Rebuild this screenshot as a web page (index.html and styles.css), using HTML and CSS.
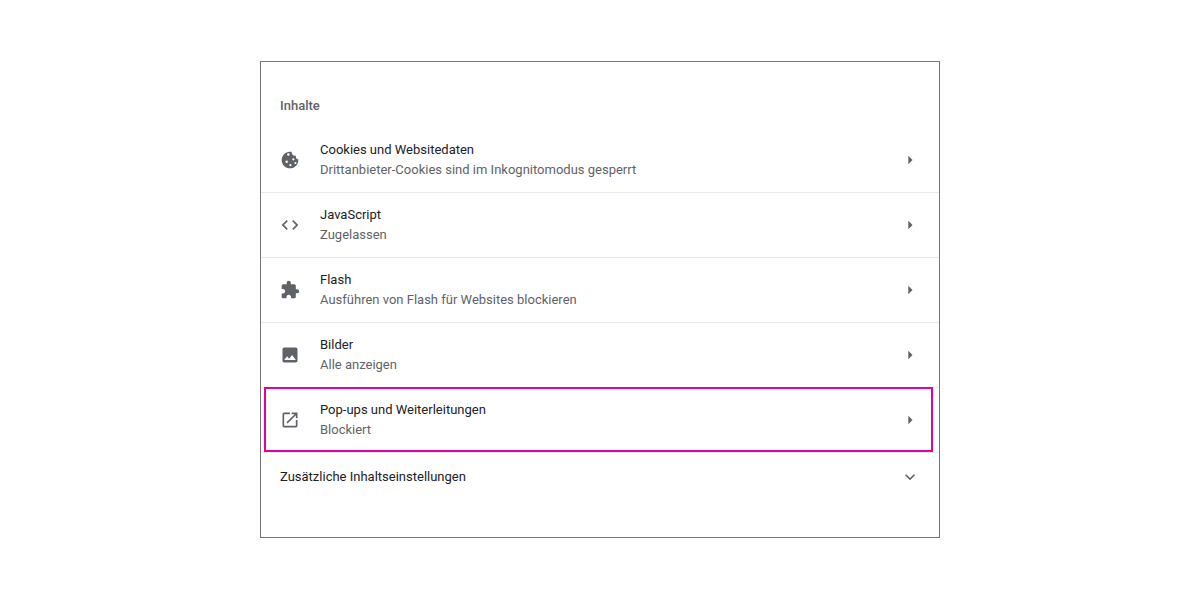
FILE: index.html
```html
<!DOCTYPE html>
<html>
<head>
<meta charset="UTF-8">
<title>Inhalte</title>
<link rel="stylesheet" href="styles.css">
</head>
<body>
<div class="frame">
  <h3 class="section-title">Inhalte</h3>

  <div class="row">
    <svg class="row-icon" viewBox="0 0 24 24"><path fill-rule="evenodd" d="M21.95 10.99c-1.79-.03-3.7-1.95-2.68-4.22-2.97 1-5.78-1.59-5.19-4.56C7.11.74 2 6.41 2 12c0 5.52 4.48 10 10 10 5.89 0 10.54-5.08 9.95-11.01zM10 7a1.5 1.5 0 1 1 0-3 1.5 1.5 0 0 1 0 3zm-2 8.5a1.5 1.5 0 1 1 0-3 1.5 1.5 0 0 1 0 3zm4.5 4a1.3 1.3 0 1 1 0-2.6 1.3 1.3 0 0 1 0 2.6zm3.5-7a1.3 1.3 0 1 1 0-2.6 1.3 1.3 0 0 1 0 2.6zm2.5 4.2a1.2 1.2 0 1 1 0-2.4 1.2 1.2 0 0 1 0 2.4z"/></svg>
    <div class="row-text">
      <div class="row-title">Cookies und Websitedaten</div>
      <div class="row-sub">Drittanbieter-Cookies sind im Inkognitomodus gesperrt</div>
    </div>
    <svg class="row-arrow" viewBox="0 0 24 24"><path d="M10 17l5-5-5-5v10z"/></svg>
  </div>

  <div class="row">
    <svg class="row-icon" viewBox="0 0 24 24"><path d="M9.4 16.6L4.8 12l4.6-4.6L8 6l-6 6 6 6 1.4-1.4zm5.2 0l4.6-4.6-4.6-4.6L16 6l6 6-6 6-1.4-1.4z"/></svg>
    <div class="row-text">
      <div class="row-title">JavaScript</div>
      <div class="row-sub">Zugelassen</div>
    </div>
    <svg class="row-arrow" viewBox="0 0 24 24"><path d="M10 17l5-5-5-5v10z"/></svg>
  </div>

  <div class="row">
    <svg class="row-icon" viewBox="0 0 24 24"><path d="M20.5 11H19V7c0-1.1-.9-2-2-2h-4V3.5C13 2.12 11.88 1 10.5 1S8 2.12 8 3.5V5H4c-1.1 0-1.99.9-1.99 2v3.8H3.5c1.49 0 2.7 1.21 2.7 2.7s-1.21 2.7-2.7 2.7H2V20c0 1.1.9 2 2 2h3.8v-1.5c0-1.49 1.21-2.7 2.7-2.7 1.49 0 2.7 1.21 2.7 2.7V22H17c1.1 0 2-.9 2-2v-4h1.5c1.38 0 2.5-1.12 2.5-2.5S21.88 11 20.5 11z"/></svg>
    <div class="row-text">
      <div class="row-title">Flash</div>
      <div class="row-sub">Ausführen von Flash für Websites blockieren</div>
    </div>
    <svg class="row-arrow" viewBox="0 0 24 24"><path d="M10 17l5-5-5-5v10z"/></svg>
  </div>

  <div class="row">
    <svg class="row-icon" viewBox="0 0 24 24"><path d="M21 19V5c0-1.1-.9-2-2-2H5c-1.1 0-2 .9-2 2v14c0 1.1.9 2 2 2h14c1.1 0 2-.9 2-2zM8.5 13.5l2.5 3.01L14.5 12l4.5 6H5l3.5-4.5z"/></svg>
    <div class="row-text">
      <div class="row-title">Bilder</div>
      <div class="row-sub">Alle anzeigen</div>
    </div>
    <svg class="row-arrow" viewBox="0 0 24 24"><path d="M10 17l5-5-5-5v10z"/></svg>
  </div>

  <div class="row">
    <svg class="row-icon" viewBox="0 0 24 24"><path d="M19 19H5V5h7V3H5c-1.11 0-2 .9-2 2v14c0 1.1.89 2 2 2h14c1.1 0 2-.9 2-2v-7h-2v7zM14 3v2h3.59l-9.83 9.83 1.41 1.41L19 6.41V10h2V3h-7z"/></svg>
    <div class="row-text">
      <div class="row-title">Pop-ups und Weiterleitungen</div>
      <div class="row-sub">Blockiert</div>
    </div>
    <svg class="row-arrow" viewBox="0 0 24 24"><path d="M10 17l5-5-5-5v10z"/></svg>
    <div class="highlight"></div>
  </div>

  <div class="row more">
    <div class="row-title">Zusätzliche Inhaltseinstellungen</div>
    <svg class="more-arrow" viewBox="0 0 24 24"><path d="M16.59 8.59L12 13.17 7.41 8.59 6 10l6 6 6-6z"/></svg>
  </div>
</div>
</body>
</html>
```
FILE: styles.css
```css
body {
  margin: 0;
  background-color: #fff;
  font-family: Roboto, "Liberation Sans", sans-serif;
  font-size: 13px;
}

.frame {
  box-sizing: border-box;
  width: 680px;
  height: 477px;
  margin: 61px auto 0;
  padding-top: 34px;
  border: 1px solid #757575;
}

.section-title {
  margin: 0;
  padding: 0 19px;
  height: 31px;
  font-size: 13px;
  font-weight: 500;
  line-height: 20px;
  color: #5f6368;
}

.row {
  position: relative;
  display: flex;
  align-items: center;
  box-sizing: border-box;
  height: 65px;
  padding: 0 19px;
  border-top: 1px solid #e8eaed;
}

.row:first-of-type {
  border-top: none;
}

.row-icon {
  flex: none;
  width: 20px;
  height: 20px;
  margin-right: 20px;
  fill: #5f6368;
}

.row-text {
  flex: 1;
}

.row-title {
  line-height: 20px;
  color: #202124;
}

.row-sub {
  line-height: 20px;
  color: #5f6368;
}

.row-arrow {
  flex: none;
  width: 20px;
  height: 20px;
  fill: #5f6368;
}

.more {
  justify-content: space-between;
  height: 48px;
}

.more-arrow {
  flex: none;
  width: 20px;
  height: 20px;
  fill: #5f6368;
}

.highlight {
  position: absolute;
  left: 3px;
  right: 6px;
  top: -1px;
  bottom: 0;
  border: 2px solid #e6009e;
}
```
